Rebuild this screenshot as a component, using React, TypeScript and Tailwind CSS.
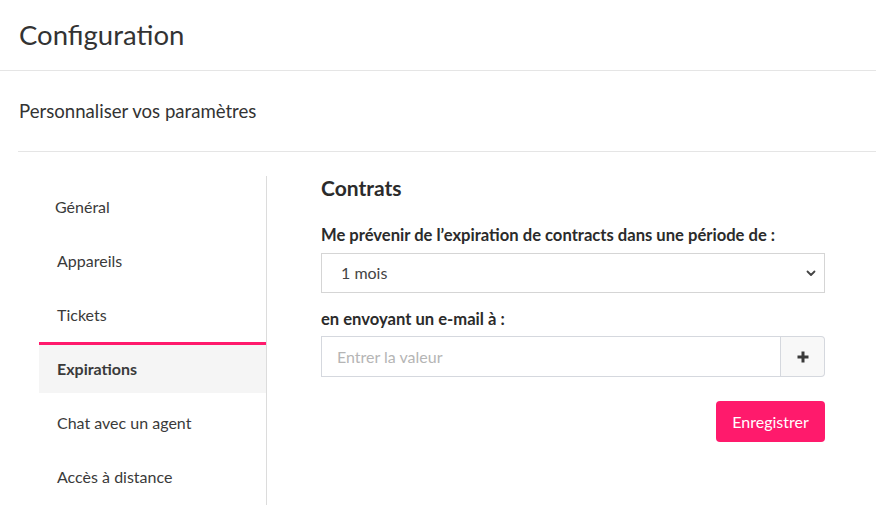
import React from "react";

const items = ["Général", "Appareils", "Tickets", "Expirations", "Chat avec un agent", "Accès à distance"];

export default function App() {
  return (
    <div className="w-[876px] h-[528px] bg-white text-[#333] overflow-hidden" style={{ fontFamily: "Lato, 'Noto Sans', sans-serif" }}>
      <div className="h-[71px] border-b border-[#e5e5e5] pl-[19px] flex items-center">
        <h1 className="text-[27.5px] leading-none text-[#333]">Configuration</h1>
      </div>
      <div className="pl-[18px]">
        <div className="h-[81px] border-b border-[#e5e5e5] flex items-center pl-[1px] pt-[2px]">
          <span className="text-[18.6px] text-[#333]">Personnaliser vos paramètres</span>
        </div>
        <div className="flex pt-[24px]">
          <div className="ml-[21px] w-[228px] border-r border-[#dcdcdc] pt-[4px] h-[329px]">
            {items.map((it, i) => {
              const active = it === "Expirations";
              if (active)
                return (
                  <div key={it} className="h-[51px] mb-[3px] border-t-[3px] border-[#ff1a6c] bg-[#f5f5f5] flex items-center pl-[18px] font-bold text-[16px] text-[#3a3a3a]">
                    {it}
                  </div>
                );
              return (
                <div key={it} className={`h-[54px] flex items-center text-[16px] text-[#3a3a3a] ${i === 0 ? "pl-[16px]" : "pl-[18px]"}`}>
                  {it}
                </div>
              );
            })}
          </div>
          <div className="ml-[54px] w-[504px] flex flex-col">
            <h2 className="text-[21px] leading-[24px] font-bold text-[#2b2b2b]">Contrats</h2>
            <label className="mt-[25px] text-[16.6px] leading-[20px] font-bold text-[#2b2b2b]">
              Me prévenir de l’expiration de contracts dans une période de :
            </label>
            <div className="mt-[8px] h-[40px] border border-[#d5d5d5] flex items-center justify-between pl-[19px] pr-[6px]">
              <span className="text-[16px] text-[#444]">1 mois</span>
              <svg width="12" height="12" viewBox="0 0 12 12" className="mr-[1px]">
                <path d="M2.5 4.5 L6 8 L9.5 4.5" fill="none" stroke="#444" strokeWidth="1.8" strokeLinecap="round" strokeLinejoin="round" />
              </svg>
            </div>
            <label className="mt-[16px] text-[16.6px] leading-[20px] font-bold text-[#2b2b2b]">en envoyant un e-mail à :</label>
            <div className="mt-[7px] h-[41px] flex">
              <div className="flex-1 border border-[#d5d8de] flex items-center pl-[15px]">
                <span className="text-[16px] text-[#b5b5b5]">Entrer la valeur</span>
              </div>
              <div className="w-[44px] border border-l-0 border-[#d5d8de] rounded-r-[4px] bg-[#f8f8f8] flex items-center justify-center">
                <svg width="14" height="14" viewBox="0 0 14 14">
                  <path d="M7 1.5 V12.5 M1.5 7 H12.5" stroke="#3a3a3a" strokeWidth="3" />
                </svg>
              </div>
            </div>
            <div className="mt-[24px] flex justify-end">
              <button className="h-[41px] w-[109px] rounded-[4px] bg-[#ff1a6c] text-white text-[16px] flex items-center justify-center">
                Enregistrer
              </button>
            </div>
          </div>
        </div>
      </div>
    </div>
  );
}
